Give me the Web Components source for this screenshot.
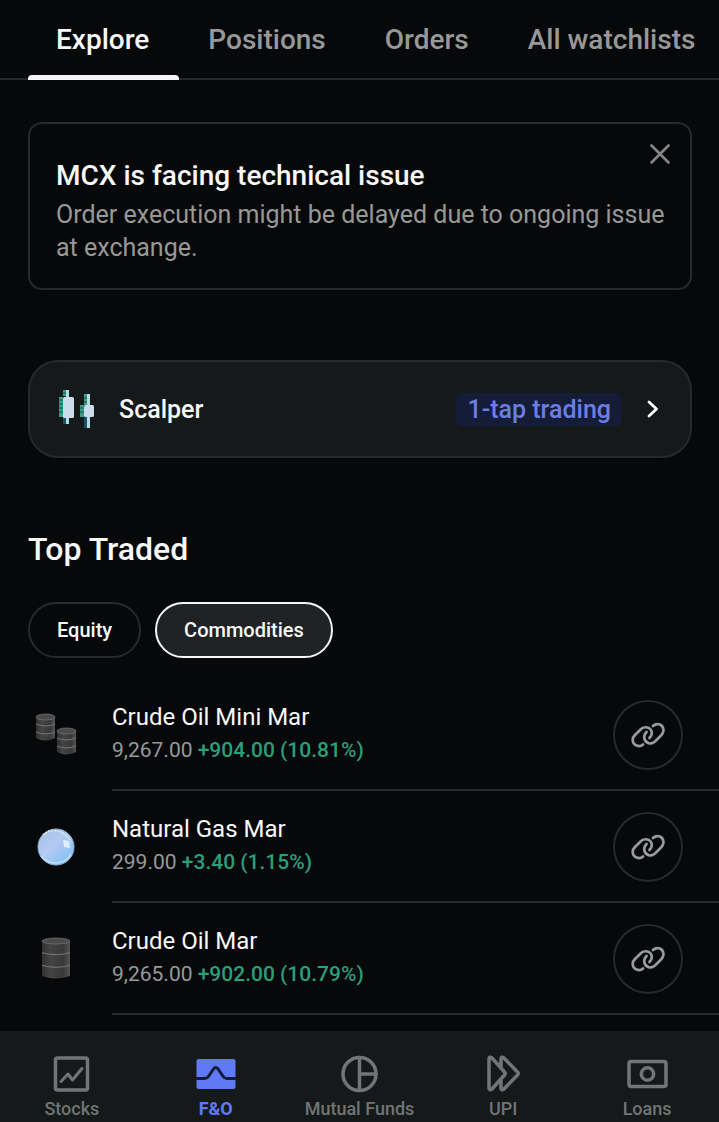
<!DOCTYPE html>
<html lang="en">
<head>
<meta charset="utf-8">
<meta name="viewport" content="width=device-width, initial-scale=1">
<title>Explore F&amp;O</title>
<style>
  :root {
    --bg: #070809;
    --surface: #151919;
    --line: #27292a;
    --text: #f8f8f8;
    --muted: #979999;
    --dim: #717575;
    --accent: #6079f5;
    --gain: #2a9f7b;
  }
  html { background: var(--bg); }
  body { margin: 0; color: var(--text); font-family: Roboto, "Liberation Sans", sans-serif; }
</style>
</head>
<body>
<fo-app></fo-app>

<script>
const define = (name, html, setup) => {
  const template = document.createElement('template');
  template.innerHTML = html;
  customElements.define(name, class extends HTMLElement {
    constructor() {
      super();
      this.attachShadow({ mode: 'open' }).append(template.content.cloneNode(true));
    }
    connectedCallback() { if (setup) setup(this, this.shadowRoot); }
  });
};

define('nav-tab', `
<style>
  :host { display: block; flex: none; }
  a { display: flex; position: relative; height: 80px; box-sizing: border-box; padding: 0 30px 0 28px; align-items: center;
      color: var(--muted); text-decoration: none; font-size: 28px; line-height: 32px; font-weight: 500; }
  :host([current]) a { color: var(--text); }
  :host([current]) a::after { content: ""; position: absolute; inset: auto 0 0; height: 5px; background: #f5f5f7; border-radius: 4px 4px 0 0; }
</style>
<a href="#"><slot></slot></a>`, (el, root) => {
  if (el.hasAttribute('current')) root.querySelector('a').setAttribute('aria-current', 'page');
});

define('tab-bar', `
<style>
  :host { display: block; overflow: hidden; }
  nav { display: flex; gap: 1px; padding-left: 28px; background: linear-gradient(var(--line), var(--line)) bottom / 100% 2px no-repeat; }
</style>
<nav aria-label="Sections"><slot></slot></nav>`);

define('notice-card', `
<style>
  :host { display: block; position: relative; border: 2px solid var(--line); border-radius: 14px; padding: 34px 16px 24px 26px; }
  h2 { margin: 0; font-size: 28px; line-height: 36px; font-weight: 500; }
  p { margin: 0; padding-top: 4px; font-size: 25px; line-height: 33px; color: var(--muted); }
  button { position: absolute; top: 14px; right: 14px; width: 32px; height: 32px; padding: 0; border: 0; background: none; color: #858787; display: grid; place-items: center; }
</style>
<h2><slot name="title"></slot></h2>
<p><slot></slot></p>
<button type="button" aria-label="Dismiss"><svg width="20" height="20" viewBox="0 0 20 20" fill="none" stroke="currentColor" stroke-width="2.6" stroke-linecap="round"><path d="M1.5 1.5 18.5 18.5M18.5 1.5 1.5 18.5"/></svg></button>`);

define('feature-link', `
<style>
  :host { display: block; }
  a { display: flex; align-items: center; box-sizing: border-box; height: 98px; padding: 0 31px 0 26px; border: 2px solid var(--line); border-radius: 30px;
      background: var(--surface); color: var(--text); text-decoration: none; font-size: 25px; line-height: 33px; font-weight: 500; }
  .art { flex: none; margin-right: 24px; }
  .name { flex: 1; }
  .tag { background: #151c38; color: #6c7ee0; border-radius: 6px; padding: 0 11px; }
  .go { margin-left: 25px; }
</style>
<a href="#">
  <svg class="art" width="39" height="42" viewBox="0 0 39 42" aria-hidden="true">
    <path d="M7 2h4v6H7zM3 9h4v20H3z" fill="#3b9c86"/><path d="M3 12h4M3 16h4M3 20h4M3 24h4M7 5h4" stroke="#0f584f" stroke-width="1"/>
    <path d="M7 29h4v7H7z" fill="#17536a"/><path d="M10 2h3v34h-3z" fill="#b5dbe4"/><rect x="7" y="9" width="11" height="21" rx="1.5" fill="#cbdcec"/>
    <path d="M28 6h4v11h-4zM24 17h4v12h-4z" fill="#3b9c86"/><path d="M28 10h4M28 14h4M24 20h4M24 24h4" stroke="#0f584f" stroke-width="1"/>
    <path d="M28 29h4v11h-4z" fill="#17536a"/><path d="M31 6h3v34h-3z" fill="#b5dbe4"/><rect x="28" y="17" width="10" height="12" rx="1.5" fill="#cbdcec"/>
  </svg>
  <span class="name"><slot></slot></span>
  <span class="tag"><slot name="tag"></slot></span>
  <svg class="go" width="12" height="18" viewBox="0 0 12 18" fill="none" stroke="#fff" stroke-width="2.8" stroke-linecap="round" stroke-linejoin="round" aria-hidden="true"><path d="M2 2 9.5 9 2 16"/></svg>
</a>`);

define('filter-chip', `
<style>
  :host { display: block; }
  button { display: block; box-sizing: border-box; height: 56px; padding: 0 27px; border: 2px solid var(--line); border-radius: 28px; background: none;
           color: var(--text); font: 500 20px/24px Roboto, "Liberation Sans", sans-serif; }
  :host([selected]) button { border-color: #f5f5f5; background: #1f2325; }
</style>
<button type="button"><slot></slot></button>`, (el, root) => {
  root.querySelector('button').setAttribute('aria-pressed', el.hasAttribute('selected'));
});

const barrel = (x, y, w, h) => {
  const b = y + h, r = x + w, c = x + w / 2, s = h / 3;
  return `<path d="M${x} ${y + 3}V${b - 3}Q${c} ${b + 2} ${r} ${b - 3}V${y + 3}Z" fill="url(#side)"/>
    <ellipse cx="${c}" cy="${y + 3}" rx="${w / 2}" ry="3" fill="#4b4b4b" stroke="#777" stroke-width=".7"/>
    <path d="M${x} ${y + s + 1}Q${c} ${y + s + 5} ${r} ${y + s + 1}M${x} ${y + 2 * s}Q${c} ${y + 2 * s + 4} ${r} ${y + 2 * s}" fill="none" stroke="#777" stroke-width="1"/>`;
};
const steel = `<defs><linearGradient id="side"><stop stop-color="#303030"/><stop offset=".3" stop-color="#444"/><stop offset=".75" stop-color="#383838"/><stop offset="1" stop-color="#555"/></linearGradient></defs>`;
const art = {
  barrels: steel + barrel(8, 7, 19, 27) + barrel(29, 21, 19, 27),
  barrel: steel + barrel(14, 7, 28, 41),
  gas: `<defs><linearGradient id="orb" x1="0" y1="0" x2="1" y2="1"><stop stop-color="#a9c1e3"/><stop offset=".45" stop-color="#b4c9f4"/><stop offset="1" stop-color="#72bff0"/></linearGradient></defs>
    <circle cx="28" cy="28" r="18" fill="url(#orb)" stroke="#8fb4d2" stroke-width="1"/>
    <path d="M15 16C24 7 39 13 43 23" fill="none" stroke="#dcecf5" stroke-width="1.5" stroke-dasharray="2 1"/>
    <path d="M13 37C22 48 38 45 43 35" fill="none" stroke="#bfe6ff" stroke-width="1.5"/>
    <path d="M35 21l6 1 1 7-6-1z" fill="#e0efff"/>`
};

define('instrument-row', `
<style>
  :host { display: flex; padding-left: 28px; }
  .art { flex: none; width: 56px; height: 56px; margin: 28px 28px 0 0; }
  .body { flex: 1; display: flex; align-items: center; justify-content: space-between; box-sizing: border-box; height: 112px; padding: 2px 36px 0 0; border-bottom: 2px solid var(--line); }
  .text { padding-bottom: 4px; }
  h3 { margin: 0; font-size: 24px; line-height: 34px; font-weight: 400; }
  p { margin: 0; font-size: 21px; line-height: 32px; color: var(--muted); }
  b { font-weight: 500; color: var(--gain); }
  button { box-sizing: border-box; width: 70px; height: 70px; padding: 0; border: 2px solid var(--line); border-radius: 50%; background: none; color: #999b9c; display: grid; place-items: center; }
</style>
<svg class="art" viewBox="0 0 56 56" aria-hidden="true"></svg>
<div class="body">
  <div class="text"><h3><slot></slot></h3><p><slot name="price"></slot> <b><slot name="change"></slot></b></p></div>
  <button type="button" aria-label="Open option chain"><svg width="34" height="26" viewBox="0 0 34 26" fill="none" stroke="currentColor" stroke-width="2.7" stroke-linecap="round"><path d="M12 22.5C8.5 26 1.5 23.5 1.7 17.5C1.8 15 3 14 4.5 12.5L9 8C13.5 3 20.5 5.5 20.8 11C20.8 13.5 20 14.5 18.5 16"/><path d="M15.5 10C13.5 12 13 14 13.3 16C14 21.5 20 23 24 19.5L29.5 14C32 11.5 33 9.5 32.3 7C31.5 2 25.5 .5 22 4"/></svg></button>
</div>`, (el, root) => { root.querySelector('.art').innerHTML = art[el.getAttribute('art')]; });

const icons = {
  stocks: `<rect x="4.5" y="5" width="32" height="32" rx="2"/><path d="M10 28.5 17 21l4.500 6L31 15.500" stroke-width="3"/>`,
  fno: `<rect x="1.500" y="6" width="39" height="30" rx="2" fill="currentColor" stroke="none"/><path d="M1 25.500h8.500q2.500 0 4-2.200L18.500 16q2.300-3 4.600 0l5 7.300q1.500 2.200 4 2.200H41" stroke="#141b3a" stroke-width="3" stroke-linecap="butt"/>`,
  funds: `<circle cx="20.500" cy="21" r="16.500"/><path d="M20.500 4.500v33M20.500 21H37"/>`,
  upi: `<path d="M6 6v29q0 3 3 1l12.500-14q1.500-1.500 0-3L9 5Q6 3 6 6zM18 14V6q0-3 3-1l13.500 14q1.500 1.500 0 3L21 36q-3 2-3-1v-8"/>`,
  loans: `<rect x="2" y="8.500" width="37" height="25" rx="2"/><circle cx="20.500" cy="21" r="6.200"/>`
};

define('bottom-item', `
<style>
  :host { display: block; flex: 1; min-width: 0; }
  a { display: flex; flex-direction: column; align-items: center; gap: 3px; color: var(--dim); text-decoration: none; white-space: nowrap; font-size: 18px; line-height: 24px; font-weight: 500; }
  :host([current]) a { color: var(--accent); font-weight: 700; }
</style>
<a href="#"><svg width="41" height="41" viewBox="0 0 41 41" fill="none" stroke="currentColor" stroke-width="3.5" stroke-linecap="round" stroke-linejoin="round" aria-hidden="true"></svg><span><slot></slot></span></a>`,
(el, root) => {
  root.querySelector('svg').innerHTML = icons[el.getAttribute('icon')];
  if (el.hasAttribute('current')) root.querySelector('a').setAttribute('aria-current', 'page');
});

define('bottom-nav', `
<style>
  :host { display: block; position: sticky; bottom: 0; background: var(--surface); }
  nav { display: flex; padding: 22px 0 1px; }
</style>
<nav aria-label="Products"><slot></slot></nav>`);

define('fo-app', `
<style>
  :host { display: flex; flex-direction: column; min-height: 100vh; }
  main { flex: 1; }
  .cards { display: grid; gap: 70px; padding: 42px 27px 0 28px; }
  h1 { margin: 0; padding: 71px 28px 33px; font-size: 32px; line-height: 40px; font-weight: 500; }
  .chips { display: flex; gap: 14px; padding: 0 28px 21px; }
</style>
<tab-bar>
  <nav-tab current>Explore</nav-tab><nav-tab>Positions</nav-tab><nav-tab>Orders</nav-tab><nav-tab>All watchlists</nav-tab>
</tab-bar>
<main>
  <div class="cards">
    <notice-card><span slot="title">MCX is facing technical issue</span>Order execution might be delayed due to ongoing issue at exchange.</notice-card>
    <feature-link>Scalper<span slot="tag">1-tap trading</span></feature-link>
  </div>
  <h1>Top Traded</h1>
  <div class="chips"><filter-chip>Equity</filter-chip><filter-chip selected>Commodities</filter-chip></div>
  <instrument-row art="barrels">Crude Oil Mini Mar<span slot="price">9,267.00</span><span slot="change">+904.00 (10.81%)</span></instrument-row>
  <instrument-row art="gas">Natural Gas Mar<span slot="price">299.00</span><span slot="change">+3.40 (1.15%)</span></instrument-row>
  <instrument-row art="barrel">Crude Oil Mar<span slot="price">9,265.00</span><span slot="change">+902.00 (10.79%)</span></instrument-row>
</main>
<bottom-nav>
  <bottom-item icon="stocks">Stocks</bottom-item><bottom-item icon="fno" current>F&amp;O</bottom-item><bottom-item icon="funds">Mutual Funds</bottom-item><bottom-item icon="upi">UPI</bottom-item><bottom-item icon="loans">Loans</bottom-item>
</bottom-nav>`);
</script>
</body>
</html>
